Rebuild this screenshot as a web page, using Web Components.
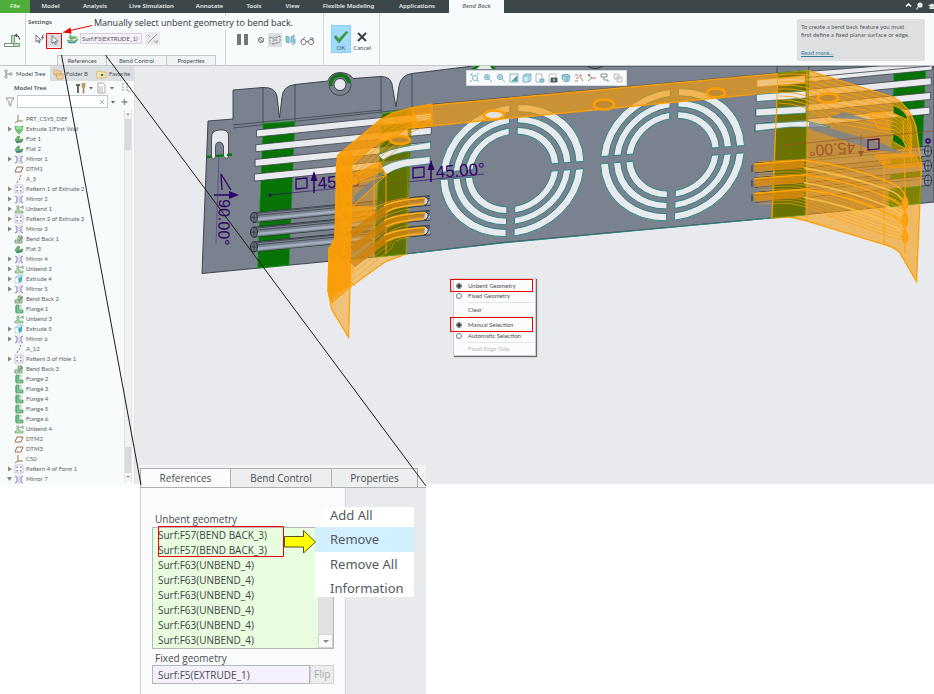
<!DOCTYPE html>
<html lang="en">
<head>
<meta charset="utf-8">
<title>Bend Back</title>
<style>
html,body{margin:0;background:#fff}
body{position:relative;min-height:100vh;overflow:hidden;font-family:Lato,"Noto Sans",sans-serif;font-size:6px;line-height:8px;color:#4a4f55;
--ui:"Noto Sans","Open Sans",sans-serif;--red:#f00000;--line:#c3c6ca}
</style>
</head>
<body>
<cad-window>
  <cad-ribbon slot="top"></cad-ribbon>
  <model-tree slot="side"></model-tree>
  <model-scene slot="main"></model-scene>
</cad-window>
<selection-menu></selection-menu>
<references-panel></references-panel>
<callout-layer></callout-layer>

<script>
function define(name, css, html, after){
  const t=document.createElement('template');
  t.innerHTML='<style>*{box-sizing:border-box}button,input{font:inherit;color:inherit;margin:0;padding:0;border:0;background:none;border-radius:0}'+css+'</style>'+html;
  customElements.define(name,class extends HTMLElement{
    constructor(){super();this.attachShadow({mode:'open'}).append(t.content.cloneNode(true));}
    connectedCallback(){if(after)after(this,this.shadowRoot);}
  });
}

define('cad-window',`
:host{display:block}
.body{display:grid;grid-template-columns:135px 1fr}
::slotted(model-scene){min-width:0}
`,`<slot name="top"></slot><div class="body"><slot name="side"></slot><slot name="main"></slot></div>`);

define('ribbon-tab',`
:host{display:flex;min-width:0}
button{flex:1;font:600 6px/13px var(--ui);color:#e6eaea;white-space:nowrap}
:host([kind=file]) button{background:#4fae3a;color:#e9f7e0}
:host([kind=active]) button{background:#f7fbfc;color:#596066;font-style:italic;font-weight:500}
`,`<button type="button"><slot></slot></button>`);

define('cad-ribbon',`
:host{display:block;background:#f7fbfc}
nav{display:flex;background:#3d4749;height:13px}
.tabs{display:grid;grid-template-columns:30px 41px 48px 65px 51px 38px 39px 73px 64px 55px}
.win{margin-left:auto;width:34px}
.win svg{display:block;width:34px;height:13px}
.bar{display:grid;grid-template-columns:26px 200px 98px 56px 1fr;height:53px;border-bottom:1px solid #c2c5c9}
.bar>div{border-right:1px solid #d3d7da;min-width:0}
.bar>div:last-child{border:0}
.mode{display:flex;align-items:center;padding-left:4px}
.settings{display:grid;grid-template-rows:18px 24px 11px;padding-left:2px}
h2{margin:0;font:600 6px/18px var(--ui);color:#4b5157}
.tools{display:flex;align-items:flex-start;padding-left:5px}
.tools button{width:14px;height:14px}
.tools svg,.ctl svg,.mode svg{display:block;overflow:visible}
.sel{background:#dcdfe1}
.tools .sel{margin:2px 6px 0 0}
.tools input{width:62px;height:11px;border:1px solid #d7cfe0;background:#f5f0fb;padding:0 1px;margin:2px 3px 0 2px;color:#555;font-size:6px}
.tools .flip{background:#e7e9eb;width:15px;height:13px;margin-top:1px}
.subs{display:grid;grid-template-columns:50px 60px 49px;padding-left:29px}
.subs button{border:1px solid #c5c8cc;border-left-width:0;background:#f0f3f4;line-height:9px}
.subs button:first-child{border-left-width:1px}
.ctl{display:flex;align-items:center;padding-left:10px;gap:3px}
.ctl button{height:14px}
.ok{display:flex;padding:12px 0 0 7px}
.ok button{width:20px;height:28px;font-size:6px;line-height:7px}
.ok svg{display:block;margin:2px auto 0}
.ok .yes{background:#9edcff;outline:1px dotted #7fc0e6;outline-offset:-1px}
.ok .no{width:22px}
.info{display:flex;justify-content:flex-end;padding:6px 9px 5px 0}
.info aside{width:128px;background:#dddfe1;padding:4px 4px;line-height:8px;font-size:6px;color:#555b61;white-space:nowrap}
.info p{margin:0 0 10px}
.info a{color:#35789f}
`,`
<nav><div class="tabs"><ribbon-tab kind="file">File</ribbon-tab><ribbon-tab>Model</ribbon-tab><ribbon-tab>Analysis</ribbon-tab><ribbon-tab>Live Simulation</ribbon-tab><ribbon-tab>Annotate</ribbon-tab><ribbon-tab>Tools</ribbon-tab><ribbon-tab>View</ribbon-tab><ribbon-tab>Flexible Modeling</ribbon-tab><ribbon-tab>Applications</ribbon-tab><ribbon-tab kind="active">Bend Back</ribbon-tab></div>
<div class="win"><svg viewBox="0 0 34 13"><path d="M6 6.500l2.500-2.500 2.500 2.500" fill="none" stroke="#fff" stroke-width="1.500"/><circle cx="20" cy="5" r="2.600" fill="#e8ecec"/><path d="M18 7l-1.500 2.500" stroke="#d6dada" stroke-width="1.300"/><path d="M28 5.500l4-2 4 2-4 2zM29.500 7v2h5V7" fill="#e8ecec"/></svg></div></nav>
<div class="bar">
<div class="mode"><svg width="17" height="14" viewBox="0 0 17 14"><path d="M.5 10.500h7v-8h3v8h5v3H.5z" fill="#b9dfb4" stroke="#5f8a60" stroke-width=".8"/><path d="M.5 10.500h9v3h-9z" fill="#fff" stroke="#777" stroke-width=".8"/><path d="M11 2.500q4-1 4.500 4M11 2.500l2-1.500M11 2.500l2.200 1.300" fill="none" stroke="#333"/></svg></div>
<div class="settings"><h2>Settings</h2>
<div class="tools">
<button type="button" aria-label="Automatic selection"><svg width="14" height="14" viewBox="0 0 14 14"><path d="M3 4v7l1.800-1.600 1.200 2.600 1-.5-1.100-2.500H8z" fill="#fff" stroke="#555" stroke-width=".8"/><path d="M10 3.500L8 7h1.500L8.500 10 11 6H9.600L11 3.500z" fill="#555"/></svg></button>
<button class="sel" type="button" aria-label="Manual selection"><svg width="14" height="14" viewBox="0 0 14 14"><path d="M5 2.500v8l2-1.800 1.300 2.800 1.100-.5-1.200-2.700h2.600z" fill="#fff" stroke="#555" stroke-width=".8"/></svg></button>
<svg width="11" height="14" viewBox="0 0 11 14"><path d="M1 6l7-1 3 2-7 2z" fill="#76be75"/><path d="M3 2v5h3M0 9l7 1 4-2-3 4-6 0z" fill="#8fc98c" stroke="#4f8a55" stroke-width=".6"/><path d="M1 11.500h7l3-3" stroke="#3296b8" fill="none"/></svg>
<input aria-label="Fixed geometry" value="Surf:F5(EXTRUDE_1)">
<button class="flip" type="button" aria-label="Flip"><svg width="15" height="13" viewBox="0 0 15 13"><path d="M3 11L12 2M3 3l2 2M9 9l3 2v-3" fill="none" stroke="#999" stroke-width=".9"/></svg></button>
</div>
<div class="subs"><button type="button">References</button><button type="button">Bend Control</button><button type="button">Properties</button></div></div>
<div class="ctl">
<button type="button" aria-label="Pause"><svg width="13" height="12"><path d="M1 0h4v11H1zM8 0h4v11H8z" fill="#71777b"/></svg></button>
<button type="button" aria-label="No preview" style="margin-left:5px"><svg width="8" height="12"><circle cx="4" cy="6" r="2.500" fill="none" stroke="#666"/><path d="M2 4.500l4 3.500" stroke="#666"/></svg></button>
<button type="button" class="sel" aria-label="Unattached preview"><svg width="14" height="14"><path d="M2 4l3 1v6l-3-1zM12 3l-3 1v6l3-1zM5 5l4-1M5 11l4-1M6 7h2" stroke="#858b90" fill="#eef0f1" stroke-dasharray="2 .7"/></svg></button>
<button type="button" aria-label="Attached preview"><svg width="12" height="12"><path d="M1 2l3 1v6L1 8zM9 1L6 3v6l3-2zM10 5v4l-3 2" fill="#8fd0e6" stroke="#6a9eb2" stroke-width=".8"/></svg></button>
<button type="button" aria-label="Verify"><svg width="15" height="12"><circle cx="3.500" cy="8" r="2.600" fill="#fff" stroke="#777"/><circle cx="11" cy="8" r="2.600" fill="#fff" stroke="#777"/><path d="M1 7l4-4M6 7.500h2.500M10 4h3v3" stroke="#777" fill="none"/></svg></button>
</div>
<div class="ok"><button class="yes" type="button"><svg width="16" height="14"><path d="M1 7l2-1.500L6 9l7-7.500 2 .5-9 11z" fill="#3f9c3c" stroke="#2c7d30" stroke-width=".5"/></svg>OK</button><button class="no" type="button"><svg width="12" height="14"><path d="M2 3l8 8M10 3l-8 8" stroke="#3b3f42" stroke-width="2"/></svg>Cancel</button></div>
<div class="info"><aside><p>To create a bend back feature you must<br>first define a fixed planar surface or edge.</p><a href="#">Read more...</a></aside></div>
</div>`);

const ICON={
csys:'<path d="M3 0v6h5M3 6L0 8" fill="none" stroke="#a2714a"/>',
extrude:'<path d="M0 1l4 1 4-1-1 5-3 3-3-3z" fill="#6fce73" stroke="#4e9953" stroke-width=".6"/><path d="M1 3h6" stroke="#d4f2cf"/>',
solid:'<path d="M0 3l3-3h5L6 3z" fill="#d3f0fa" stroke="#6aa9bf" stroke-width=".5"/><path d="M0 3h6v5H0z" fill="#fff" stroke="#8bb" stroke-width=".5"/><path d="M3 4l4-3v5L4 8z" fill="#47aacd"/>',
flat:'<path d="M0 5l3-4 2 1-2 3 5-1-1 3-5 1z" fill="#6cba68" stroke="#437d43" stroke-width=".6"/><path d="M1 7l6-1" stroke="#37759d"/>',
mirror:'<path d="M4 0v9" stroke="#b9a0c9" stroke-width=".7"/><path d="M0 1l2 1v5L0 8M8 1L6 2v5l2 1" fill="none" stroke="#8574b6"/>',
plane:'<path d="M2 2h6L6 7H0z" fill="#fff" stroke="#986c4c"/>',
axis:'<path d="M2 8l1-2M4 5l1-2M5 2l1-2" stroke="#9b6a45"/>',
pattern:'<path d="M0 0h8v8H0z" fill="#fff" stroke="#a894c7" stroke-width=".6"/><path d="M1.500 1.500h1.500v1.500h-1.500zM5 1.500h1.500v1.500H5zM1.500 5h1.500v1.500h-1.500zM5 5h1.500v1.500H5z" fill="#8b76b8"/>',
unbend:'<path d="M0 6h2V1h2v5h4v2H0z" fill="#b8ddb3" stroke="#669766" stroke-width=".6"/><path d="M5 3l3-2v3" fill="none" stroke="#555" stroke-width=".7"/>',
bend:'<path d="M0 5h3V1h4v7H0z" fill="#b8ddb3" stroke="#5f8060" stroke-width=".7"/><path d="M3 6h2V3h3" fill="none" stroke="#555" stroke-width=".7"/>',
flange:'<path d="M1 0h3v5h4v3H1z" fill="#7cca80" stroke="#4a9468" stroke-width=".7"/><path d="M1 1v6" stroke="#3aa0b2"/><path d="M4 1l2-1v4" fill="none" stroke="#8fb99a" stroke-width=".7"/>'
};
define('tree-item',`
:host{display:grid;grid-template-columns:8px 11px 1fr;align-items:center;height:10px;padding-left:7px;color:#5e6266;white-space:nowrap}
svg{display:block;overflow:visible}
`,`<svg class="t" width="6" height="6"></svg><svg class="i" width="9" height="9"></svg><span><slot></slot></span>`,
(h,r)=>{r.querySelector('.i').innerHTML=ICON[h.getAttribute('icon')]||'';
const s=h.getAttribute('state');if(s)r.querySelector('.t').innerHTML='<path d="'+(s==='open'?'M0 1h5L2.500 5z':'M1 .5v5l4-2.500z')+'" fill="#888"/>';});

const ROWS=`csys||PRT_CSYS_DEF
extrude|c|Extrude 1(First Wall
flat||Flat 1
flat||Flat 2
mirror|c|Mirror 1
plane||DTM1
axis||A_5
pattern|c|Pattern 1 of Extrude 2
mirror|c|Mirror 2
unbend|c|Unbend 1
pattern|c|Pattern 2 of Extrude 3
mirror|c|Mirror 3
bend||Bend Back 1
flat||Flat 3
mirror|c|Mirror 4
unbend|c|Unbend 2
solid|c|Extrude 4
mirror|c|Mirror 5
bend||Bend Back 2
flange||Flange 1
unbend||Unbend 3
solid|c|Extrude 5
mirror|c|Mirror 6
axis||A_12
pattern|c|Pattern 3 of Hole 1
bend||Bend Back 3
flange||Flange 2
flange||Flange 3
flange||Flange 4
flange||Flange 5
flange||Flange 6
unbend||Unbend 4
plane||DTM2
plane||DTM3
csys||CS0
pattern|c|Pattern 4 of Form 1
mirror|open|Mirror 7`.split('\n').map(r=>r.split('|')).map(([i,s,t])=>`<tree-item icon="${i}" state="${s}">${t}</tree-item>`).join('');

define('model-tree',`
:host{display:block;background:#f7fbfc;border-right:1px solid #dfe2e4}
svg{display:block;overflow:visible}
.tabs{display:grid;grid-template-columns:50px 46px 1fr;height:15px;background:#dcdfe1}
.tabs button{display:flex;align-items:center;gap:3px;padding-left:4px;white-space:nowrap;overflow:hidden}
.tabs button:first-child{background:#f7fbfc}
.head{display:flex;align-items:center;height:14px;padding:0 4px 0 14px;gap:3px}
.head h2{margin:0;font:600 6px/14px var(--ui);color:#4b5157;width:59px}
.find{display:flex;align-items:center;gap:3px;padding:0 5px 0 6px;height:13px}
.find label{display:flex;align-items:center;width:95px;height:13px;border:1px solid #c5c8cc;background:#fff;padding-right:2px}
.find input{flex:1;min-width:0}
.list{display:grid;grid-template-columns:1fr 8px;padding:0 2px 0 0}
.rows{padding-top:6px;overflow:hidden}
.sb{display:grid;grid-template-rows:9px 31px 1fr 26px 9px;background:#f0f1f2;margin:2px 0;border:solid #e0e2e4;border-width:0 1px}
.sb i{background:#d8dadd}
.sb svg{width:6px;height:8px;background:#f8f8f8}
`,`
<div class="tabs"><button type="button"><svg width="9" height="10"><path d="M2 2v6M2 5h4" stroke="#888"/><circle cx="2" cy="2" r="1.300" fill="#fff" stroke="#777" stroke-width=".7"/><circle cx="2" cy="8" r="1.300" fill="#fff" stroke="#777" stroke-width=".7"/><circle cx="7" cy="5" r="1.300" fill="#fff" stroke="#777" stroke-width=".7"/></svg>Model Tree</button>
<button type="button"><svg width="9" height="10"><path d="M0 1h3l1 1h3v4H0zM2 4h3l1 1h3v5H3z" fill="#f4d6a0" stroke="#c79b53" stroke-width=".7"/></svg>Folder B</button>
<button type="button" style="padding-left:1px"><svg width="9" height="8"><path d="M0 1h3l1 1h5v6H0z" fill="#f7e6b5" stroke="#d2ad60" stroke-width=".7"/><circle cx="5" cy="5" r="1.300" fill="#44784f"/></svg>Favorite</button></div>
<div class="head"><h2>Model Tree</h2><svg width="9" height="10"><path d="M0 1h4v2H3v7H1V3H0z" fill="#74624c"/><path d="M6 0v4l1 1v5h1V5l1-1V0" fill="#cfa862" stroke="#8a744f" stroke-width=".6"/></svg><svg width="6" height="4"><path d="M1 1h4L3 3.500z" fill="#666"/></svg><svg width="9" height="10"><path d="M1 0h5l2 2v8H1z" fill="#fff" stroke="#888" stroke-width=".7"/><path d="M2 4h4M2 6h4M2 8h4" stroke="#999" stroke-width=".7"/></svg><svg width="6" height="4"><path d="M1 1h4L3 3.500z" fill="#666"/></svg><svg width="9" height="10" style="margin-left:3px"><path d="M1 1h2M1 4h2M1 7h2M5 1h2M5 4h2M5 6l4 3" stroke="#b5b8bb" stroke-width="1.500"/></svg></div>
<div class="find"><svg width="8" height="9"><path d="M0 1h8L5 5v4L3 7.500V5z" fill="#fff" stroke="#888" stroke-width=".9"/></svg><label><input aria-label="Search"><svg width="6" height="6"><path d="M1 1l4 4M5 1L1 5" stroke="#999" stroke-width=".8"/></svg></label><svg width="5" height="4"><path d="M0 1h4L2 3.500z" fill="#555"/></svg><svg width="8" height="8" style="margin-left:2px"><path d="M3.500 1v6M.5 4h6" stroke="#888" stroke-width="1.300"/></svg></div>
<div class="list"><div class="rows">${ROWS}</div><div class="sb"><svg><path d="M1.500 5h3L3 3z" fill="#777"/></svg><i></i><span></span><i></i><svg><path d="M1.500 3h3L3 5z" fill="#777"/></svg></div></div>`);

/* ---- 3D viewport ---- */
function rings(cx,cy){
  let o='';
  for(const [a,b] of [[100,89],[82,72],[65,55]]) for(let q=0;q<4;q++){
    const g=5.500,p=(r,e)=>{const d=Math.asin(g/r),t=q*Math.PI/2+(e?Math.PI/2-d:d);return (r*Math.cos(t)).toFixed(1)+' '+(r*Math.sin(t)).toFixed(1)};
    o+=`<path vector-effect="non-scaling-stroke" d="M${p(a,0)}A${a} ${a} 0 0 1 ${p(a,1)}L${p(b,1)}A${b} ${b} 0 0 0 ${p(b,0)}z"/>`;
  }
  return `<g transform="matrix(.72 -.055 -.02 .66 ${cx} ${cy})" fill="#e9eaee" stroke="#2b8583" stroke-width="1">${o}</g>`;
}
const rep=(n,f)=>Array.from({length:n},(_,i)=>f(i)).join('');
const slot=(x1,y1,x2,y2,i)=>`<path d="M${x1-i*.7} ${y1+i*14.700}L${x2-i*.7} ${y2+i*14.700}v7L${x1-i*.7} ${y1+7+i*14.700}z"/>`;
const scene=`
<path d="M202 273.500L208 121L233 119V90L263 87.500Q275 87 277 96L279.500 118L282 97Q283 86 295 84.500L328 81Q330 73 340 72.500Q350 73 353 78.500L380 76.500Q390 76 392 84L396 107L399 86Q401 75 412 73.500L473 66H934V202L771 218L503 242.500L405 254z" fill="#79828e" stroke="#333a42" stroke-width=".9"/>
<path d="M473 66h20l3 3h-18z" fill="#e9eaee"/><path d="M471 69l4-3h5l-4 3zM490 66h4l2 3h-4z" fill="#0a7a0d"/><path d="M587 66q8 5 16 0" fill="none" stroke="#333"/>
<g fill="none" stroke="#353c44" stroke-width=".7"><path d="M233 125L382 110M233 128L400 110M263 87.500V124M295 84.500v38M381 77v37M412 74v34M430 104.500L801 71M777 66v9M809 66v8"/></g>
<path d="M211.500 158v-20q0-8 8-8h3q6 0 6 6v21q-2 3-5-1v-10q-1-4-4-4-4 0-4 5v10q-2 3-4 1z" fill="#e9eaee" stroke="#333" stroke-width=".8"/>
<path d="M207 157l5-.5M216 156l7-.5M227 155l5-.5" stroke="#0a7a0d" stroke-width="2.500"/>
<circle cx="340" cy="84.500" r="11" fill="#79828e" stroke="#333a42" stroke-width=".8"/><circle cx="340" cy="84.500" r="6" fill="#e9eaee" stroke="#333a42"/><path d="M331 86a9 9 0 0 1 18-3" fill="none" stroke="#0a7a0d" stroke-width="3"/>
<g fill="#077307" stroke="#19a519" stroke-width=".6"><path d="M263 123.500L295 121.500L289 265L257.500 268z"/><path d="M382 114L412 108L406 254L374 257z"/><path d="M778 73L809 71L805 215L772 218z"/><path d="M894 72L926 67L920 203L889 207z"/></g>
<g fill="#e9eaee" stroke="#3b4248" stroke-width=".8">${rep(4,i=>slot(256.500,130,432,112.500,i))}${rep(4,i=>slot(757,80,932,63,i))}<path d="M800 72L880 66h50L801 78z"/></g>
<g fill="none">${rep(3,i=>{const y=217.500+i*14.700;return `<path d="M253 ${y}L430 ${y-17}" stroke="#30363d" stroke-width="10.500"/><path d="M254 ${y}L430 ${y-17}" stroke="#7b8594" stroke-width="9"/><path d="M254 ${y+2}L430 ${y-15}" stroke="#a3afbf" stroke-width="2.500"/><path d="M256 ${y-2}L430 ${y-19}M256 ${y-4}L430 ${y-21}" stroke="#3a4048" stroke-width=".8"/><ellipse cx="254" cy="${y}" rx="3.500" ry="5" fill="#68717d" stroke="#22282e"/><path d="M251 ${y}h6M254 ${y-4}v8" stroke="#22282e" stroke-width=".6"/>`})}
${rep(3,i=>{const y=168+i*14.700;return `<path d="M755 ${y}L929 ${y-17}" stroke="#30363d" stroke-width="10.500"/><path d="M755 ${y}L929 ${y-17}" stroke="#8a94a3" stroke-width="9"/><path d="M755 ${y-2}L929 ${y-19}" stroke="#3a4048" stroke-width=".7"/><ellipse cx="928" cy="${y-17}" rx="3.500" ry="5.500" fill="#929ba5" stroke="#22282e"/><path d="M925 ${y-17}h6M928 ${y-22}v10" stroke="#22282e" stroke-width=".7"/>`})}</g>
${rings(512,170.500)}${rings(672.500,154.700)}
<g fill="none" stroke="#31006a" stroke-width="1.300"><path d="M296 179l11-1v10l-11 1zM413 168l11-1v10l-11 1z"/><path d="M314 193v-20M431 182v-21M214 195h20" stroke-width="1.500"/><path d="M270 195L370 185M388 184L484 174" stroke-width=".6"/><path d="M219 156L216 244" stroke="#5c3d84" stroke-width=".7"/><path d="M222 190L221 174L231 190"/></g>
<path d="M310.500 181l3.500-10 3.500 10zM427.500 170l3.500-10 3.500 10zM229 191l10 4-10 4z" fill="#31006a"/><circle cx="270" cy="195" r="1.500" fill="#31006a"/>
<g fill="#31006a" font-family="Liberation Sans" font-size="17"><text transform="translate(318 189) rotate(-4)">45.00°</text><text transform="translate(436 178) rotate(-4)">45.00°</text><text transform="translate(219 199) rotate(91)" font-size="16">90.00°</text></g>
<path d="M503 243L771 218M405 254L503 243" stroke="#2b8583" fill="none"/>
<g fill="#f59a08" fill-opacity=".66" stroke="#ff9f05" stroke-width="1.300">
<path d="M445 104L801 71.500L809 71L778 92L573 112L430 126L404 127L409 108z"/>
<path d="M412 108L392 113L380 120L338 155L336.500 165L335 238L329 250L328 291L332 310L348.500 337L350 287L385 262L406 254L409 128L432 126V104z" fill-opacity=".5"/>
<path d="M778 74L809 71L893 97Q910 106 916 127L921.500 165L916.500 281.500L900 253Q895 247 883 244L803 220L790 217L772 218z" fill-opacity=".6"/></g>
<path d="M382 114L412 108L406 254L374 257zM778 73L809 71L805 215L772 218z" fill="#4c6200" fill-opacity=".6" stroke="#56a516" stroke-width=".7"/>
<path d="M889 190l32-4v17l-32 4z" fill="#4c7200" fill-opacity=".3" stroke="#56a516" stroke-width=".7"/>
<g fill="#eec27a" stroke="#f5a021" stroke-width=".8"><path d="M380 119L431 113v7L382 125zM380 134L408 130v7L380 141z"/><path d="M757 80L805 76v7L757 87z"/></g>
<g fill="#e9eaee" stroke="#2b8583" stroke-width=".7"><path d="M378 155Q390 149 408 146L430.500 142v7L404 152Q390 155 383 160zM380 168Q392 161 406 159L430 156.500v7L404 167Q392 170 386 175z"/><path d="M756.500 94.500L806 91v7L756.500 101.500zM756 109L806 106v7L756 116zM755.500 124L806 121l24 6L790 127L755.500 131z"/></g>
<g fill="#fa9d07" fill-opacity=".72" stroke="#ff9d00" stroke-width="1">
<path d="M338 155L380 120L392 113L412 108L418 124L374 146L352 165L350 287L332 303L328 291L329 250L335 238z"/>
<path d="M338 158L352 150L350 284L330 298L329 250L335 238z"/>
<path d="M350 207h20l4 10-22 5z"/>
<path d="M380 162l6 14-6-4-28 12v-9z"/>
<path d="M875 155h40l6 11-35 2z" fill-opacity=".5"/><path d="M869 113l16-1 5 18-12-2z" fill-opacity=".3"/></g>
<path d="M354 196L384 170L382 178L354 204z" fill="#79828e" opacity=".8"/>
<g fill="none" stroke="#ffa000" stroke-width="1">
${rep(13,i=>`<path d="M${338+i%3*3} ${158+i*9}l${4+i%4*2} 12l-7 9l8 8"/>`)}
${rep(5,i=>`<circle cx="333" cy="${250+i*9}" r="4.500"/>`)}
${rep(7,i=>`<path d="M340 ${166+i*5}L${382+i*4} ${124+i*3}Q400 ${116+i*3} 431 ${113+i*2}" stroke-opacity=".75"/>`)}
${rep(11,i=>`<path d="M350 ${222+i*6}L${372+i*2} ${208+i*4}Q390 ${200+i*4} 410 ${197+i*4}" stroke-opacity=".6"/>`)}
<path d="M350 287V222M352 207L385 176L350 185M374 257V176M386 172V254M807 72V218M778 74L772 218M884 155V244M905 180V253M903 120L905 180"/>
${rep(9,i=>`<path d="M779 ${75+i*3.500}Q805 ${71+i*4} 830 ${82+i*5}L895 ${102+i*4}Q910 ${112+i*4} 912 ${130+i*4}" stroke-opacity=".85"/>`)}
${rep(16,i=>`<path d="M758 ${162+i*2.800}L790 ${160+i*2.900}Q810 ${160+i*3.100} 830 ${168+i*3.200}L889 ${187+i*3.300}Q905 ${193+i*3.200} 907 ${202+i*2.500}" stroke-width=".8" stroke-opacity=".75"/>`)}
</g>
<g fill="none" stroke-linecap="butt">
${rep(3,i=>`<path d="M352 ${235+i*14.700}L388 ${208+i*14.700}Q396 ${203+i*14.700} 425 ${201+i*14.700}" stroke="#d18105" stroke-width="8" stroke-opacity=".75"/><path d="M384 ${206+i*14.700}Q395 ${200+i*14.700} 425 ${198+i*14.700}M386 ${212+i*14.700}Q396 ${206+i*14.700} 425 ${204+i*14.700}" stroke="#ffb01c" stroke-width="1.500"/><path d="M425 ${197+i*14.700}q6 2 1 8l-2 0" fill="#cfd3d7" stroke="#333"/>`)}
${rep(3,i=>`<path d="M754 ${168+i*14.700}L804 ${164+i*14.700}" stroke="#d88808" stroke-width="8" stroke-opacity=".8"/><path d="M754 ${164+i*14.700}L804 ${160+i*14.700}Q850 ${166+i*14.700} 889 ${182+i*16}Q904 ${188+i*16} 906 ${198+i*18}" stroke="#ffa508" stroke-width="1.600"/><path d="M804 ${168+i*14.700}Q850 ${176+i*14.700} 889 ${190+i*17}Q900 ${194+i*17} 905 ${204+i*17}" stroke="#ffc64a" stroke-width="1.800" stroke-opacity=".8"/><path d="M752 ${165+i*14.700}v7" stroke="#333"/><ellipse cx="905" cy="${203+i*17}" rx="3" ry="6" fill="#f8a31a" stroke="#ff9d00"/>`)}
</g>
<g fill="#c08a32" stroke="#ff9f05" stroke-width="2.500"><ellipse cx="494" cy="115" rx="10" ry="4.500" fill="#e6e2da"/><ellipse cx="604" cy="104.500" rx="10" ry="5"/><ellipse cx="716" cy="93" rx="9" ry="4.500"/><ellipse cx="828" cy="98" rx="10" ry="4.500"/><ellipse cx="400" cy="140" rx="10" ry="4"/></g>
<path d="M809 129L870 149L901 153L884 144L809 122zM843 112l27 8-40-2z" fill="#79828e" opacity=".8"/>
<path d="M893 105q14 6 15 15l-15-7zM893 133q12 5 13 16l-14-8z" fill="#076d07" stroke="#ff9f05"/>
<g fill="#a4532b"><text transform="translate(855 142) rotate(176)" font-family="Liberation Sans" font-size="16">45.00°</text><path d="M858 151l6 0-3 6zM784 144l3 1-3 1z"/></g>
<path d="M785 145L934 131M861 135v18" stroke="#a4532b" stroke-width=".7"/>
<path d="M868 140l11-1v10l-11 1z" fill="none" stroke="#4a1060" stroke-width="1.300"/>
<path d="M926 141a2 2 0 1 0 4 0a2 2 0 1 0-4 0" stroke="#31006a" fill="none" stroke-width="1.500"/>`;
const V=[
'<circle cx="5" cy="5" r="2.600"/><path d="M1 1h2M1 1v2M9 1H7M1 9V7M7 7l2 2"/>',
'<circle cx="4" cy="4" r="2.600" fill="#bfe3ee"/><path d="M6 6l3 3M3 4h2M4 3v2"/>',
'<circle cx="4" cy="4" r="2.600" fill="#bfe3ee"/><path d="M6 6l3 3M3 4h2"/>',
'<path d="M1 1h8v8H1z"/><path d="M8 3v5H3z" fill="#4d9cb0"/>',
'<path d="M1 3h6v6H1zM1 3l2-2h6L7 3M9 1v6L7 9" fill="#c9ebf3"/>',
'<path d="M1 1h6v8H1z" stroke="#aaa"/><path d="M5 6h4v3H5z" fill="#8cd3e5"/>',
'<path d="M1 1h7v8H1z" stroke="#bbb"/><path d="M3 5h6v4H3z" fill="#555" stroke="#555"/><circle cx="6" cy="7" r="1" fill="#fff"/>',
'<path d="M1 2l5-1 3 2-1 5-4 1-3-3z" fill="#9ed3e0"/><path d="M1 2l5 2v5M6 4l3-1"/>',
'<path d="M1 2h3M2 5h3M5 2l4 6M1 8h3M7 1v2" stroke="#9a6a40"/>',
'<path d="M1 2l4 3M1 8l4-3" stroke="#5a8f4d"/><path d="M5 5h4" stroke="#c44"/><circle cx="2" cy="2" r="1" fill="#c44" stroke="none"/>',
'<path d="M1 1h6v3H1zM4 4v3h4v2" stroke="#777"/>',
'<path d="M1 1h5v5H1zM4 4h5v5H4z" stroke="#b5b5b5" fill="#eee"/>'];
define('model-scene',`
:host{display:block;position:relative;background:#e9eaee;overflow:hidden}
.view{position:absolute;left:0;top:0;display:block;width:100%;height:100%}
.bar{position:absolute;left:331px;top:4px;display:flex;align-items:center;height:16px;padding:0 2px;gap:1px;background:#fafbfc;border:1px solid #d5d8dc}
.bar button{width:12px;height:13px;padding:1px}
.bar svg{display:block}
`,`<svg class="view" viewBox="135 66 799 418" preserveAspectRatio="xMinYMin slice">${scene}</svg>
<div class="bar">${V.map((p,i)=>`<button type="button" aria-label="View tool ${i+1}"><svg width="10" height="10" fill="none" stroke="#64a5b6" stroke-width=".8">${p}</svg></button>`).join('')}</div>`);

define('selection-menu',`
:host{position:absolute;left:453px;top:278px;width:81px;background:#fbfcfc;border:1px solid #c9ccd0;box-shadow:1px 1px 1px #6e6e6e;font-size:6px}
label,button{display:grid;grid-template-columns:12px 1fr;align-items:center;width:100%;height:8px;text-align:left;white-space:nowrap}
label{padding-left:2px}
label.on{border:1px solid var(--red);height:13px;margin-left:-4px;padding-left:5px;width:83px}
label.man{height:15px}
input{appearance:none;width:6px;height:6px;border:1px solid #777;border-radius:50%;background:#fff}
input:checked{background:radial-gradient(#333 0 1.500px,#fff 2px)}
button{padding-left:14px;display:block;height:13px}
button:disabled{color:#b9bcc0;height:12px}
hr{border:0;border-top:1px solid #e2e4e6;margin:0 2px 0 14px}
hr.gap{margin-top:2px}
`,`<label class="on"><input type="radio" name="g" checked>Unbent Geometry</label><label><input type="radio" name="g">Fixed Geometry</label><hr class="gap">
<button type="button">Clear</button><hr>
<label class="on man"><input type="radio" name="m" checked>Manual Selection</label><label><input type="radio" name="m">Automatic Selection</label><hr class="gap">
<button type="button" disabled>Fixed Edge Side</button>`);

define('references-panel',`
:host{position:absolute;left:140px;top:465px;bottom:0;width:286px;background:#e9eaee;font:10px/15px "Open Sans","Noto Sans",sans-serif;color:#484c50;display:flex;flex-direction:column}
.tabs{display:grid;grid-template-columns:91px 101px 86px 1fr;height:23px;padding-top:3px;background:#f1f4f5;border-bottom:1px solid #aeb1b4}
.tabs button{border:1px solid #aeb1b4;border-width:1px 1px 0 0;background:#eceeef}
.tabs button:first-child{background:#fbfcfc;border-left-width:1px}
.pane{flex:1;width:206px;background:#fafbfb;border:solid #d0d2d5;border-width:0 1px;padding:24px 11px 0 11px}
.pane label,.pane h3{display:block;margin:0;font:inherit;padding-left:3px}
.list{display:grid;grid-template-columns:1fr 15px;border:1px solid #b5b8ba;background:#e8fcdf;width:182px;margin-bottom:2px}
ul{list-style:none;margin:0;padding:0 0 0 5px;color:#3e4246}
.sb{display:flex;align-items:flex-end;background:#dfe1e3}
.sb svg{width:15px;height:14px;background:#fafafa;border:1px solid #d2d2d2}
.pane label{line-height:14px}
.row{display:flex}
.row input{width:160px;height:19px;border:1px solid #b5b8ba;background:#f5f0fd;padding:0 5px}
.row button{width:24px;height:19px;border:1px solid #cfd1d3;background:#ebedee;color:#a8abae}
`,`<div class="tabs"><button type="button">References</button><button type="button">Bend Control</button><button type="button">Properties</button></div>
<div class="pane"><h3>Unbent geometry</h3><div class="list"><ul><li>Surf:F57(BEND BACK_3)</li><li>Surf:F57(BEND BACK_3)</li>${'<li>Surf:F63(UNBEND_4)</li>'.repeat(6)}</ul><div class="sb"><svg><path d="M4 5h6l-3 3z" fill="#888"/></svg></div></div>
<label for="fx">Fixed geometry</label><div class="row"><input id="fx" value="Surf:F5(EXTRUDE_1)"><button type="button">Flip</button></div></div>
<item-menu></item-menu>`);

define('item-menu',`
:host{position:absolute;left:175px;top:42px;width:99px;background:#fff;font:13px/17px var(--ui);color:#55595d}
button{display:block;width:100%;height:25px;text-align:left;padding-left:15px}
button:first-of-type{height:20px;padding-bottom:3px;border-left:6px solid #fafbfb;padding-left:9px}
button:last-of-type{height:20px;padding-top:3px}
.hot{background:#d2f0ff}
`,`<button type="button">Add All</button><button type="button" class="hot">Remove</button><button type="button">Remove All</button><button type="button">Information</button>`);

define('callout-layer',`
:host{position:absolute;inset:0;pointer-events:none}
svg{position:absolute;left:0;top:0;overflow:visible}
p{position:absolute;left:91px;top:16px;margin:0;padding:0 3px;background:#f7fbfc;font:9px/14px "Open Sans","Noto Sans",sans-serif;color:#2f3336;white-space:nowrap}
`,`<p>Manually select unbent geometry to bend back.</p>
<svg width="934" height="694" fill="none"><path d="M61.500 55L141 485M105.500 55L426 486" stroke="#1a1a1a" stroke-width="1"/>
<g stroke="#f00000"><path d="M46.500 33.500h15v15h-15zM158.500 526.500h125v30h-125z"/><path d="M92 25.500L68 31"/><path d="M62.500 32.500l8-5 1 6z" fill="#f00000" stroke="none"/></g>
<path d="M284.500 536.500h19v-6l12 11.500-12 11v-6h-19z" fill="#ffff00" stroke="#55551a"/></svg>`);
</script>
</body>
</html>
